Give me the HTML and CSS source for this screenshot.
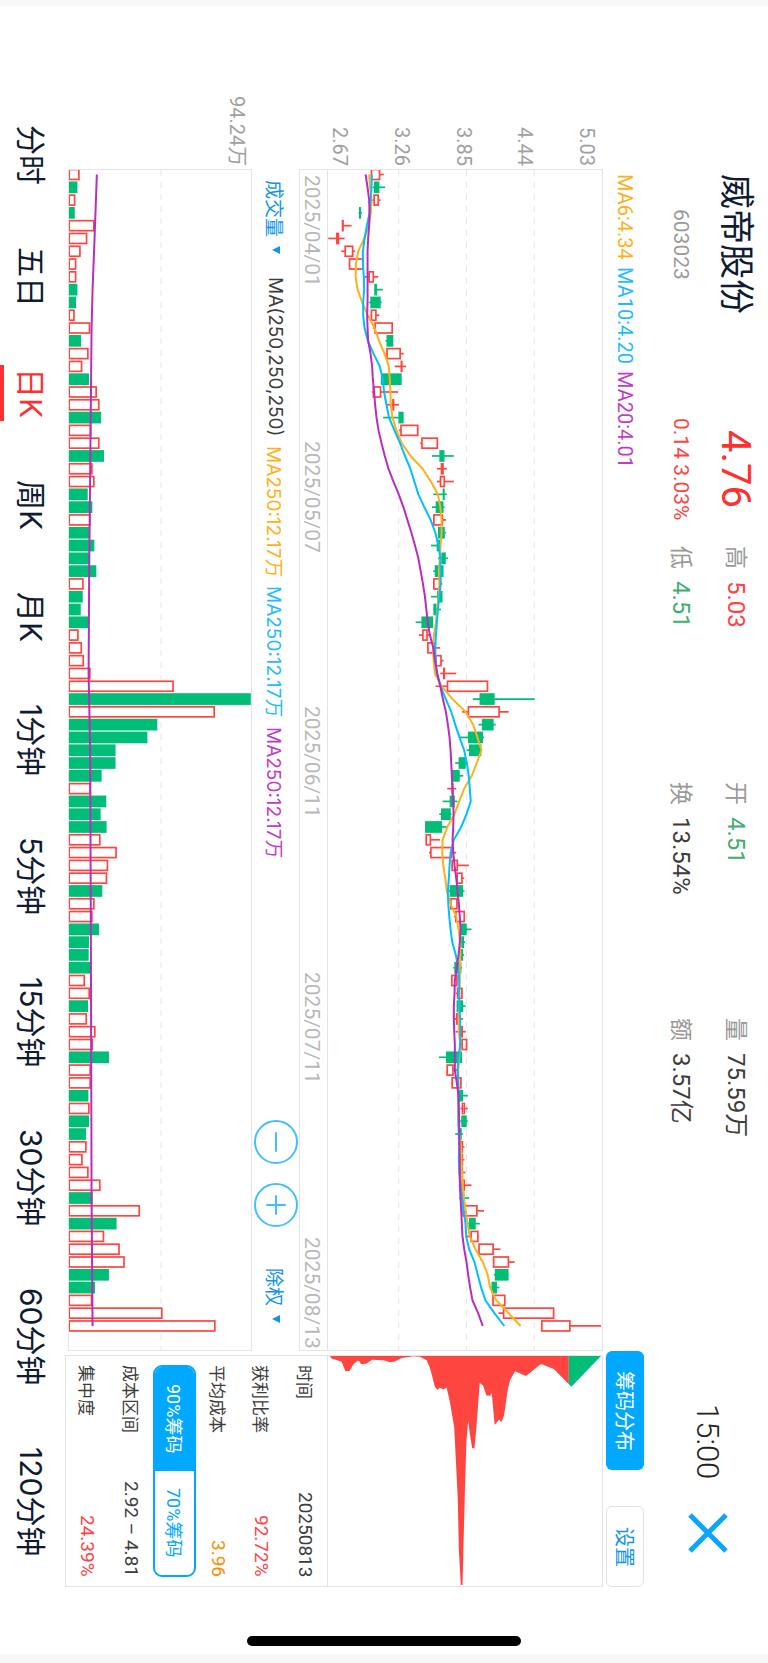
FILE: index.html
```html
<!DOCTYPE html>
<html lang="zh-CN">
<head>
<meta charset="utf-8">
<meta name="viewport" content="width=device-width, initial-scale=1">
<title>威帝股份 603023</title>
<link rel="stylesheet" href="styles.css">
</head>
<body>
<div class="app">
  <div class="screen">
    <header class="head">
      <div class="pair pair-name"><h1 class="name">威帝股份</h1><span class="code">603023</span></div>
      <div class="pair pair-price"><strong class="price">4.76</strong><span class="change">0.14 3.03%</span></div>
      <div class="pair stat"><p><span class="key">高</span><span class="red">5.03</span></p><p><span class="key">低</span><span class="green">4.51</span></p></div>
      <div class="pair stat"><p><span class="key">开</span><span class="green">4.51</span></p><p><span class="key">换</span><span>13.54%</span></p></div>
      <div class="pair stat"><p><span class="key">量</span><span>75.59万</span></p><p><span class="key">额</span><span>3.57亿</span></p></div>
      <time class="clock">15:00</time>
      <button class="close" type="button" aria-label="关闭"><svg viewBox="0 0 40 40"><path d="M2 2 38 38M38 2 2 38"/></svg></button>
    </header>

    <div class="toolbar">
      <div class="legend"><span class="ma-a">MA6:4.34</span><span class="ma-b">MA10:4.20</span><span class="ma-c">MA20:4.01</span></div>
      <div class="actions"><button class="btn btn-fill" type="button">筹码分布</button><button class="btn btn-line" type="button">设置</button></div>
    </div>

    <main class="board">
      <div class="axis axis-price"><span>5.03</span><span>4.44</span><span>3.85</span><span>3.26</span><span>2.67</span></div>
      <div class="plot plot-price"><svg id="price" viewBox="0 0 275 1180" preserveAspectRatio="none"></svg></div>
      <div class="plot plot-chips"><svg id="chips" viewBox="0 0 275 231" preserveAspectRatio="none"></svg></div>
      <div class="dates"><span>2025/04/01</span><span>2025/05/07</span><span>2025/06/11</span><span>2025/07/11</span><span>2025/08/13</span></div>
      <div class="volbar">
        <button class="drop" type="button">成交量<svg viewBox="0 0 8 8"><path d="M8 0V8L0 4Z"/></svg></button>
        <span class="formula">MA(250,250,250)</span>
        <span class="ma-a">MA250:12.17万</span><span class="ma-b">MA250:12.17万</span><span class="ma-c">MA250:12.17万</span>
        <button class="zoom zoom-out" type="button" aria-label="缩小"><svg viewBox="0 0 44 44"><circle cx="22" cy="22" r="21"/><path d="M22 13V31"/></svg></button>
        <button class="zoom" type="button" aria-label="放大"><svg viewBox="0 0 44 44"><circle cx="22" cy="22" r="21"/><path d="M22 13V31M13 22H31"/></svg></button>
        <button class="drop drop-adjust" type="button">除权<svg viewBox="0 0 8 8"><path d="M8 0V8L0 4Z"/></svg></button>
      </div>
      <div class="axis axis-volume"><span>94.24万</span></div>
      <div class="plot plot-volume"><svg id="volume" viewBox="0 0 183 1180" preserveAspectRatio="none"></svg></div>
      <section class="info">
        <p><span>时间</span><b>20250813</b></p>
        <p><span>获利比率</span><b class="red">92.72%</b></p>
        <p><span>平均成本</span><b class="orange">3.96</b></p>
        <div class="toggle"><button class="on" type="button">90%筹码</button><button type="button">70%筹码</button></div>
        <p><span>成本区间</span><b>2.92 – 4.81</b></p>
        <p><span>集中度</span><b class="red">24.39%</b></p>
      </section>
    </main>

    <nav class="tabs">
      <button type="button">分时</button><button type="button">五日</button><button class="active" type="button">日K</button><button type="button">周K</button><button type="button">月K</button><button type="button">1分钟</button><button type="button">5分钟</button><button type="button">15分钟</button><button type="button">30分钟</button><button type="button">60分钟</button><button type="button">120分钟</button>
    </nav>
  </div>
  <div class="home"><i></i></div>
</div>
<script src="chart.js"></script>
</body>
</html>
```
FILE: styles.css
```css
* { box-sizing: border-box; }
html, body { height: 100%; margin: 0; }
h1, p { margin: 0; font-weight: inherit; }
b, strong { font-weight: inherit; }

body {
  background: #fff;
  color: #3c3c3c;
  font-family: Roboto, "Noto Sans CJK SC", sans-serif;
  font-weight: 400;
  font-size: 20px;
}

button {
  margin: 0;
  padding: 0;
  border: 0;
  background: none;
  color: inherit;
  font: inherit;
  writing-mode: inherit;
  text-orientation: inherit;
  white-space: nowrap;
}

/* Landscape layout: inline axis runs down, block axis runs right to left */
.app {
  display: flex;
  writing-mode: vertical-rl;
  text-orientation: sideways;
  width: 100%;
  height: 100%;
  border-inline-start: 6px solid #f7f7f7;
  border-inline-end: 9px solid #f7f7f7;
  white-space: nowrap;
}
.screen {
  display: flex;
  flex-direction: column;
  flex: 1;
  min-height: 0;
}
.home {
  display: flex;
  align-items: center;
  justify-content: flex-end;
  inline-size: 67px;
  padding-inline-end: 8px;
}
.home i { inline-size: 10px; block-size: 274px; border-radius: 5px; background: #000; }

.red { color: #ff4343; }
.green { color: #3fae6e; }
.orange { color: #ff8c00; }
.ma-a { color: #ffaf1a; }
.ma-b { color: #1ebcff; }
.ma-c { color: #c03cc4; }

/* Header */
.head {
  display: flex;
  align-items: center;
  padding-inline: 168px 34px;
  block-size: 121px;
}
.pair { display: flex; flex-direction: column; }
.pair > * { block-size: 55px; line-height: 55px; }
.pair-name { align-items: center; inline-size: 140px; margin-inline-end: 98px; }
.pair-price { align-items: center; inline-size: 114px; margin-inline-end: 20px; }
.name { font-size: 35px; color: #0f1a33; }
.code { font-size: 21px; color: #999; }
.price { font-size: 40px; color: #ff3030; }
.change { font-size: 21px; color: #ff4343; }
.stat { inline-size: 236px; font-size: 24px; }
.stat p { display: flex; gap: 12px; }
.key { font-size: 23px; color: #999; }
.clock { margin-inline-start: auto; font-size: 31px; font-weight: 300; color: #222; }
.close { inline-size: 40px; block-size: 40px; margin-inline-start: 34px; }
.close svg { display: block; width: 100%; height: 100%; stroke: #0aa5ff; stroke-width: 5; }

/* Legend and actions */
.toolbar {
  display: flex;
  align-items: center;
  justify-content: space-between;
  block-size: 44px;
  padding-inline-start: 168px;
}
.legend { display: flex; gap: 7px; font-size: 20px; }
.actions { display: flex; gap: 36px; }
.btn { block-size: 38px; border-radius: 6px; font-size: 20px; }
.btn-fill { inline-size: 119px; background: #00a8ff; color: #fff; }
.btn-line { inline-size: 81px; border: 1px solid #e2e2e2; color: #1494e6; }

/* Charts */
.board {
  display: grid;
  flex: 1;
  grid-template-columns: 163px 1fr 232px;
  grid-template-rows: 276fr 28px 47px 187fr;
  min-width: 0;
}
.axis {
  display: flex;
  flex-direction: column;
  justify-content: space-between;
  padding-inline-end: 3px;
  text-align: end;
  line-height: 26px;
  color: #a0a0a0;
}
.axis-price { padding-block-start: 3px; }
.plot { min-width: 0; min-height: 0; border: 1px solid #e4e4e4; }
.plot svg { display: block; width: 100%; height: 100%; }
.axis-price, .plot-price, .plot-chips { grid-row: 1; }
.axis-price, .axis-volume { grid-column: 1; }
.axis-volume { padding-block-start: 2px; }
.plot-price, .dates, .volbar, .plot-volume { grid-column: 2; margin-inline-end: 4px; }
.plot-chips, .info { grid-column: 3; }
.dates {
  display: flex;
  align-items: center;
  justify-content: space-between;
  grid-row: 2;
  padding-inline: 5px 1px;
  padding-block-start: 3px;
  border: 1px solid #e4e4e4;
  border-block-start: 0;
  font-size: 21px;
  line-height: 24px;
  color: #b8b8b8;
}
.volbar {
  display: flex;
  align-items: center;
  gap: 9px;
  grid-row: 3;
  padding-inline: 11px 28px;
  font-family: Inter, "Noto Sans CJK SC", sans-serif;
  font-size: 19px;
}
.axis-volume, .plot-volume { grid-row: 4; }
.plot-volume { margin-block-end: 3px; }
.drop { display: flex; align-items: center; gap: 9px; color: #1494e6; }
.drop svg { width: 8px; height: 8px; fill: #1494e6; }
.formula { margin-inline-start: 14px; }
.zoom { inline-size: 44px; block-size: 44px; }
.zoom svg { display: block; width: 100%; height: 100%; fill: none; stroke: #42bfff; stroke-width: 2; stroke-linecap: round; }
.zoom-out { margin-inline: auto 10px; }
.drop-adjust { margin-inline-start: 32px; }

.grid { stroke: #e6e6e6; stroke-width: 1; stroke-dasharray: 6 6; }
.up { fill: #fff; stroke: #ff4540; stroke-width: 1.7; }
.down { fill: #00bd78; stroke: #00bd78; stroke-width: 1.7; }
.line { fill: none; stroke-width: 2; }
.line-a { stroke: #ffaf1a; }
.line-b { stroke: #00bfff; }
.line-c { stroke: #b92dbe; }
.chip-win { fill: #ff4540; }
.chip-loss { fill: #00bd78; }

/* Chip statistics */
.info {
  display: flex;
  flex-direction: column;
  grid-row: 2 / 5;
  border: 1px solid #e4e4e4;
  border-block-start: 0;
  padding-inline: 9px;
  font-size: 17px;
}
.info p { display: flex; align-items: center; justify-content: space-between; flex: 1; }
.info b { font-size: 19px; }
.toggle { display: flex; block-size: 43px; border: 2px solid #00a8ff; border-radius: 9px; overflow: hidden; font-size: 18px; color: #00a8ff; }
.toggle button { flex: 1; }
.toggle .on { background: #00a8ff; color: #fff; }

/* Period tabs */
.tabs {
  display: flex;
  justify-content: space-between;
  block-size: 65px;
  padding-inline: 116px 27px;
  font-family: Inter, "Noto Sans CJK SC", sans-serif;
  font-size: 30px;
  color: #0f1a33;
}
.tabs button { padding-inline: 3px; padding-block-start: 3px; border-block-end: 4px solid transparent; }
.tabs .active { border-color: #ff3030; color: #ff3030; }
```
FILE: chart.js
```js
const NS = "http://www.w3.org/2000/svg";
const STEP = 12.794;

// low, body start, body end, high, 1 = rise / 0 = fall
const candles = [
[152,152,180,191,1],[157,162,177,195,0],[157,160,176,181,1],[115,117,121,125,0],[65,65,70,94,1],
[24,48,56,73,1],[63,73,99,104,1],[86,86,130,130,1],[133,145,161,174,1],[163,163,170,188,0],
[147,151,181,185,0],[152,152,169,177,1],[158,163,218,218,1],[196,200,219,219,0],[196,199,242,251,1],
[224,242,247,258,1],[183,183,244,244,0],[155,158,183,234,1],[201,217,222,237,1],[189,236,250,250,0],
[236,241,295,295,1],[301,304,354,354,1],[336,359,373,402,0],[351,363,371,381,1],[351,360,375,402,1],
[340,369,373,381,0],[336,348,370,374,0],[340,340,369,378,1],[355,355,374,378,0],[333,351,362,362,0],
[354,365,377,384,0],[340,345,370,370,0],[340,340,363,367,1],[333,352,367,367,0],[341,341,349,363,0],
[287,305,339,339,0],[297,307,323,328,1],[322,322,345,360,1],[346,346,365,371,1],[361,370,375,409,1],
[347,381,505,505,1],[459,480,524,645,0],[427,444,540,567,1],[476,487,521,528,0],[418,445,489,493,0],
[441,448,484,487,0],[406,417,437,440,0],[394,397,419,430,0],[382,395,400,409,1],[368,390,404,413,0],
[358,364,392,395,0],[316,316,366,382,0],[317,317,333,360,1],[327,331,397,409,1],[395,395,414,447,1],
[407,410,428,433,1],[386,390,429,434,0],[391,391,413,413,1],[402,406,435,435,1],[420,424,440,455,0],
[420,425,432,436,0],[416,420,429,433,0],[400,404,424,426,0],[394,394,413,413,1],[408,412,428,428,1],
[411,411,429,437,0],[403,409,414,430,1],[407,424,428,438,1],[418,425,442,442,1],[357,379,426,426,0],
[380,380,401,412,1],[395,395,425,425,1],[411,415,429,444,0],[422,426,435,444,1],[421,425,440,444,0],
[406,417,425,429,0],[420,424,429,434,1],[420,424,429,434,1],[420,424,428,437,1],[419,425,435,455,1],
[418,428,433,448,0],[428,428,473,493,1],[444,448,467,480,0],[437,452,476,476,1],[476,476,522,542,1],
[520,520,568,585,1],[522,526,566,566,0],[516,516,531,539,0],[518,518,557,557,1],[536,550,704,704,1],
[665,665,753,845,1]];

const maA = [147,150,154,152,146,132,114,107,106,112,126,143,163,177,193,206,209,211,212,217,229,245,272,308,333,354,361,365,365,362,360,357,358,356,352,348,342,339,341,345,365,398,437,460,473,485,471,456,433,418,404,382,368,367,370,376,381,392,409,416,421,421,420,420,418,418,416,417,421,418,415,416,414,415,415,418,424,425,426,429,432,438,443,450,467,489,504,511,530,567,603];
const maB = [155,154,151,148,140,133,128,128,131,132,129,129,133,143,160,179,188,192,199,207,223,240,255,271,283,295,313,332,346,356,361,362,362,358,354,351,348,346,347,351,362,378,394,406,419,433,441,447,450,453,440,424,402,392,389,387,384,385,388,392,397,408,415,418,418,418,421,421,421,416,413,415,416,416,416,417,418,417,418,422,426,432,437,439,448,464,474,484,497,524,554];
const maC = [136,142,147,148,147,144,142,142,142,142,142,141,142,144,151,156,158,162,165,169,175,184,194,205,220,236,250,262,274,285,295,302,309,315,319,323,330,340,345,352,361,369,378,384,389,392,394,396,398,400,401,400,398,400,404,409,413,417,420,422,420,416,411,405,404,402,402,403,405,405,405,411,416,417,418,418,419,420,420,420,422,424,426,428,433,440,445,451,458,475,489];

const volumes = [239,232,226,224,284,262,242,229,229,232,228,224,271,243,266,247,267,291,299,303,274,299,312,278,284,263,277,272,267,283,268,289,251,248,242,267,236,246,252,272,523,755,647,473,443,347,347,305,273,319,302,320,302,351,325,322,307,284,278,297,267,266,272,255,270,264,261,287,279,327,273,273,265,269,267,258,260,248,266,302,278,421,350,313,360,375,327,285,277,489,649];
const volMa = [[0,291],[5,284],[9,278],[12,275],[20,272],[31,268],[39,266],[45,271],[60,273],[80,275],[90,278]];

const chipWin = "28,527 36,536 46,538 64,544 75,571 80,573 88,571 100,551 112,541 118,543 122,551 138,550 156,538 190,540 208,545 222,544 245,533 280,528 300,529 320,540 330,562 345,620 352,629 360,623 370,628 380,622 390,665 403,742 408,840 414,960 417,1110 423,1217 428,1217 432,1060 436,900 440,780 445,722 450,760 457,805 464,805 470,740 480,608 490,616 500,646 511,647 516,638 525,735 538,718 545,726 553,706 564,630 571,600 586,573 619,587 664,551 703,566 748,612 748,527";
const chipLoss = "748,527 748,612 756,620 845,527";

function add(svg, tag, cls, attrs) {
  const el = document.createElementNS(NS, tag);
  el.setAttribute("class", cls);
  for (const k in attrs) el.setAttribute(k, attrs[k]);
  svg.appendChild(el);
}
const rowY = i => 4.5 + i * STEP;
const px = v => (v - 23) / 3;
const vx = v => (v - 207) / 3;
const path = pts => "M" + pts.map(p => p[0].toFixed(1) + " " + p[1].toFixed(1)).join("L");

const price = document.getElementById("price");
[71, 139, 207].forEach(x => add(price, "path", "grid", { d: `M${x} 0V1180` }));
candles.forEach(([lo, a, b, hi, up], i) => {
  const cls = up ? "up" : "down", y = rowY(i);
  add(price, "path", cls, { d: `M${px(lo)} ${y}H${px(hi)}` });
  add(price, "rect", cls, { x: px(a) + .6, y: y - 5, width: Math.max((b - a) / 3 - 1.2, .4), height: 10 });
});
[[maA, "a"], [maB, "b"], [maC, "c"]].forEach(([m, c]) =>
  add(price, "path", "line line-" + c, { d: path(m.map((v, i) => [px(v), rowY(i)])) }));

const volume = document.getElementById("volume");
add(volume, "path", "grid", { d: "M92.5 0V1180" });
volumes.forEach((v, i) =>
  add(volume, "rect", candles[i][4] ? "up" : "down", { x: .2, y: rowY(i) - 5, width: vx(v) - .9, height: 10 }));
add(volume, "path", "line line-c", { d: path(volMa.map(([i, v]) => [vx(v), rowY(i)])) });

const chips = document.getElementById("chips");
const shift = s => s.split(" ").map(p => {
  const [x, y] = p.split(",").map(Number);
  return (px(x)).toFixed(1) + "," + ((y - 527) / 3).toFixed(1);
}).join(" ");
add(chips, "polygon", "chip-win", { points: shift(chipWin) });
add(chips, "polygon", "chip-loss", { points: shift(chipLoss) });
```
